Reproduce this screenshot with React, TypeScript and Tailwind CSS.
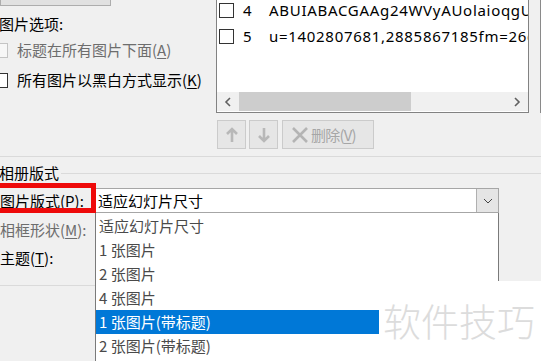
import React from 'react';

const cjk = "font-['Noto_Sans_CJK_SC','Noto_Sans',sans-serif]";

function Check({ disabled = false }: { disabled?: boolean }) {
  return (
    <div
      className={
        'w-[15px] h-[15px] shrink-0 border ' +
        (disabled ? 'border-[#c4c4c4] bg-[#f7f7f7]' : 'border-[#333] bg-white')
      }
    />
  );
}

function Key({ k }: { k: string }) {
  return (
    <>
      (<span className="underline underline-offset-2">{k}</span>)
    </>
  );
}

const files = [
  { n: '4', name: 'ABUIABACGAAg24WVyAUolaioqgU' },
  { n: '5', name: 'u=1402807681,2885867185fm=26gp' },
];

const layouts = ['适应幻灯片尺寸', '1 张图片', '2 张图片', '4 张图片', '1 张图片(带标题)', '2 张图片(带标题)'];

export default function App() {
  return (
    <div className={`relative w-[541px] h-[361px] overflow-hidden bg-[#f0f0f0] text-[15px] text-black ${cjk}`}>
      {/* upper group */}
      <div className="flex h-[156px]">
        <div className="w-[216px] flex flex-col">
          <div className="w-[111px] h-[6px] bg-[#e1e1e1] border border-t-0 border-[#adadad]" />
          <div className="mt-[8px] h-[20px] leading-[20px] -ml-[1px]">图片选项:</div>
          <div className="mt-[6px] h-[20px] flex items-center gap-[9px] -ml-[7px]">
            <Check disabled />
            <span className="text-[#6d6d6d] leading-[20px]">
              标题在所有图片下面<Key k="A" />
            </span>
          </div>
          <div className="mt-[10px] h-[20px] flex items-center gap-[9px] -ml-[7px]">
            <Check />
            <span className="leading-[20px]">
              所有图片以黑白方式显示<Key k="K" />
            </span>
          </div>
        </div>

        <div className="flex flex-col">
          <div className="w-[313px] h-[113px] bg-white border-x border-b border-[#828282] flex flex-col">
            <div className="flex-1 overflow-hidden">
              <div className="-mt-[3px]">
                {files.map((f) => (
                  <div key={f.n} className="h-[26px] flex items-center pl-[2px] whitespace-nowrap">
                    <Check />
                    <span className="ml-[9px] w-[26px] shrink-0 font-['Noto_Sans',sans-serif]">{f.n}</span>
                    <span className="font-['Noto_Sans',sans-serif] tracking-[0.7px]">{f.name}</span>
                  </div>
                ))}
              </div>
            </div>
            <div className="h-[19px] mb-[1px] flex items-center bg-[#f0f0f0]">
              <div className="w-[22px] flex justify-center">
                <svg width="8" height="10" viewBox="0 0 8 10">
                  <path d="M6 1 L2 5 L6 9" fill="none" stroke="#606060" strokeWidth="1.6" />
                </svg>
              </div>
              <div className="w-[172px] h-full bg-[#cdcdcd]" />
              <div className="flex-1" />
              <div className="w-[22px] flex justify-center">
                <svg width="8" height="10" viewBox="0 0 8 10">
                  <path d="M2 1 L6 5 L2 9" fill="none" stroke="#606060" strokeWidth="1.6" />
                </svg>
              </div>
            </div>
          </div>
          <div className="mt-[7px] ml-[1px] flex">
            <div className="w-[29px] h-[29px] bg-[#e6e6e6] border border-[#cbcbcb] flex items-center justify-center">
              <svg width="14" height="16" viewBox="0 0 14 16">
                <path d="M7 2 V15 M2 7 L7 2 L12 7" fill="none" stroke="#b8b8b8" strokeWidth="2.6" />
              </svg>
            </div>
            <div className="ml-[3px] w-[29px] h-[29px] bg-[#e6e6e6] border border-[#cbcbcb] flex items-center justify-center">
              <svg width="14" height="16" viewBox="0 0 14 16">
                <path d="M7 1 V14 M2 9 L7 14 L12 9" fill="none" stroke="#b8b8b8" strokeWidth="2.6" />
              </svg>
            </div>
            <div className="ml-[4px] w-[92px] h-[29px] bg-[#e6e6e6] border border-[#cbcbcb] flex items-center pl-[8px] gap-[2px] text-[#a6a6a6] text-[15px]">
              <svg width="18" height="16" viewBox="0 0 18 16" className="shrink-0">
                <path d="M2 1 L16 15 M16 1 L2 15" fill="none" stroke="#b4b4b4" strokeWidth="2.6" />
              </svg>
              <span className="leading-[20px] tracking-[-0.8px] whitespace-nowrap">
                删除<Key k="V" />
              </span>
            </div>
          </div>
        </div>

        <div className="ml-auto w-px h-[113px] bg-[#8a8a8a]" />
      </div>

      <div className="h-px bg-[#dadada]" />

      {/* 相册版式 */}
      <div className="mt-[6px] h-[20px] flex items-center gap-[2px]">
        <span className="leading-[20px] -ml-[1px]">相册版式</span>
        <div className="flex-1 h-px bg-[#dadada] mt-[1px]" />
      </div>

      <div className="mt-[5px] flex">
        <div className="w-[95px] h-[25px] flex items-center">
          <span className="leading-[20px]">
            图片版式<Key k="P" />:
          </span>
        </div>
        <div className="w-[404px] h-[25px] bg-white border border-[#a6a6a6] flex items-center">
          <span className="flex-1 pl-[2px] leading-[20px]">适应幻灯片尺寸</span>
          <div className="w-[22px] h-full bg-[#e5e5e5] border-l border-[#b0b0b0] flex items-center justify-center">
            <svg width="10" height="6" viewBox="0 0 10 6">
              <path d="M1 1 L5 5 L9 1" fill="none" stroke="#444" strokeWidth="1" />
            </svg>
          </div>
        </div>
      </div>

      <div className="w-[95px] flex flex-col">
        <div className="mt-[7px] h-[20px] leading-[20px] text-[#6d6d6d]">
          相框形状<Key k="M" />:
        </div>
        <div className="mt-[8px] h-[20px] leading-[20px]">
          主题<Key k="T" />:
        </div>
        <div className="mt-[17px] h-px bg-[#dadada]" />
      </div>

      {/* open dropdown list */}
      <div className="absolute left-[95px] top-[213px] w-[404px] h-[160px] bg-white border-x border-[#7a7a7a] pt-[1px]">
        {layouts.map((t, i) => (
          <div
            key={t}
            className={
              'h-[24px] flex items-center pl-[3px] ' +
              (i === 4 ? 'bg-[#0078d7] text-white' : 'text-[#4a4a4a]')
            }
          >
            <span className="leading-[20px]">{t}</span>
          </div>
        ))}
      </div>

      {/* red annotation */}
      <div className="absolute -left-[10px] top-[183px] w-[106px] h-[30px] border-[5px] border-[#ee0a0a]" />

      {/* watermark */}
      <div className="absolute left-[379px] top-[281px] w-[162px] h-[80px] bg-white flex items-center pl-[4px]">
        <span className="text-[38px] leading-[40px] text-[#dcdcdc] font-light -mt-[2px]">软件技巧</span>
      </div>
    </div>
  );
}
